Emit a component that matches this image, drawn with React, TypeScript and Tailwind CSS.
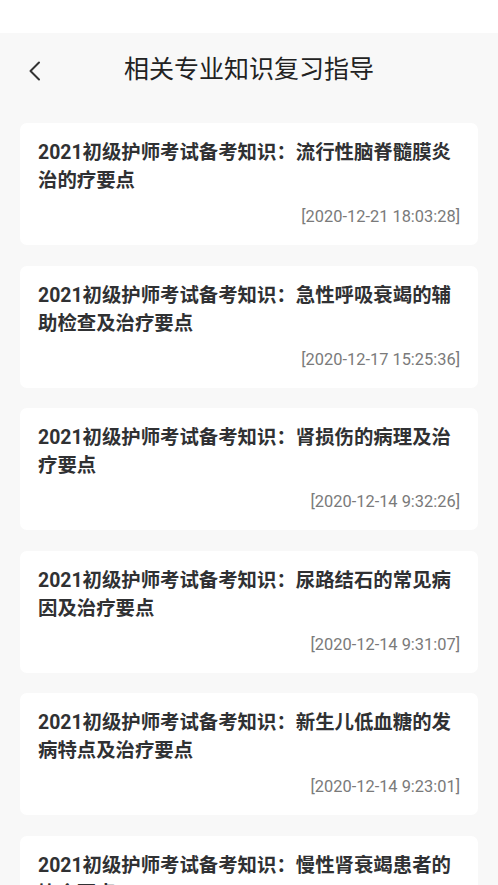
import React from 'react';

type Article = {
  title: string;
  date: string;
};

const ARTICLES: Article[] = [
  { title: '2021初级护师考试备考知识：流行性脑脊髓膜炎治的疗要点', date: '[2020-12-21 18:03:28]' },
  { title: '2021初级护师考试备考知识：急性呼吸衰竭的辅助检查及治疗要点', date: '[2020-12-17 15:25:36]' },
  { title: '2021初级护师考试备考知识：肾损伤的病理及治疗要点', date: '[2020-12-14 9:32:26]' },
  { title: '2021初级护师考试备考知识：尿路结石的常见病因及治疗要点', date: '[2020-12-14 9:31:07]' },
  { title: '2021初级护师考试备考知识：新生儿低血糖的发病特点及治疗要点', date: '[2020-12-14 9:23:01]' },
  { title: '2021初级护师考试备考知识：慢性肾衰竭患者的饮食要点', date: '[2020-12-14 9:20:45]' },
];

const FONT = "font-['Roboto','Noto_Sans_CJK_SC',sans-serif]";

export default function App() {
  return (
    <div className={`min-h-screen bg-[#f8f8f8] ${FONT}`}>
      {/* Status bar */}
      <div className="h-[33px] bg-white" />

      {/* Header */}
      <div className="relative flex h-[70px] items-center justify-center">
        <button type="button" className="absolute left-[24px] top-[24px] p-1 text-[#333]" aria-label="返回">
          <svg width="14" height="20" viewBox="0 0 14 20" fill="none">
            <path d="M11 1.5L2.5 10L11 18.5" stroke="currentColor" strokeWidth="2" strokeLinecap="round" strokeLinejoin="round" />
          </svg>
        </button>
        <h1 className="pt-[2px] text-[25px] font-normal leading-none text-[#222]">相关专业知识复习指导</h1>
      </div>

      {/* List */}
      <div className="flex flex-col gap-[20.5px] px-[20px] pt-[20px]">
        {ARTICLES.map((a) => (
          <div key={a.date + a.title} className="rounded-[7px] bg-white px-[18px] pb-[17px] pt-[16px]">
            <div className="text-[19.4px] font-bold leading-[28px] text-[#303133]">{a.title}</div>
            <div className="mt-[11px] text-right text-[16.4px] leading-[22px] text-[#7a7a7a]">{a.date}</div>
          </div>
        ))}
      </div>
    </div>
  );
}
